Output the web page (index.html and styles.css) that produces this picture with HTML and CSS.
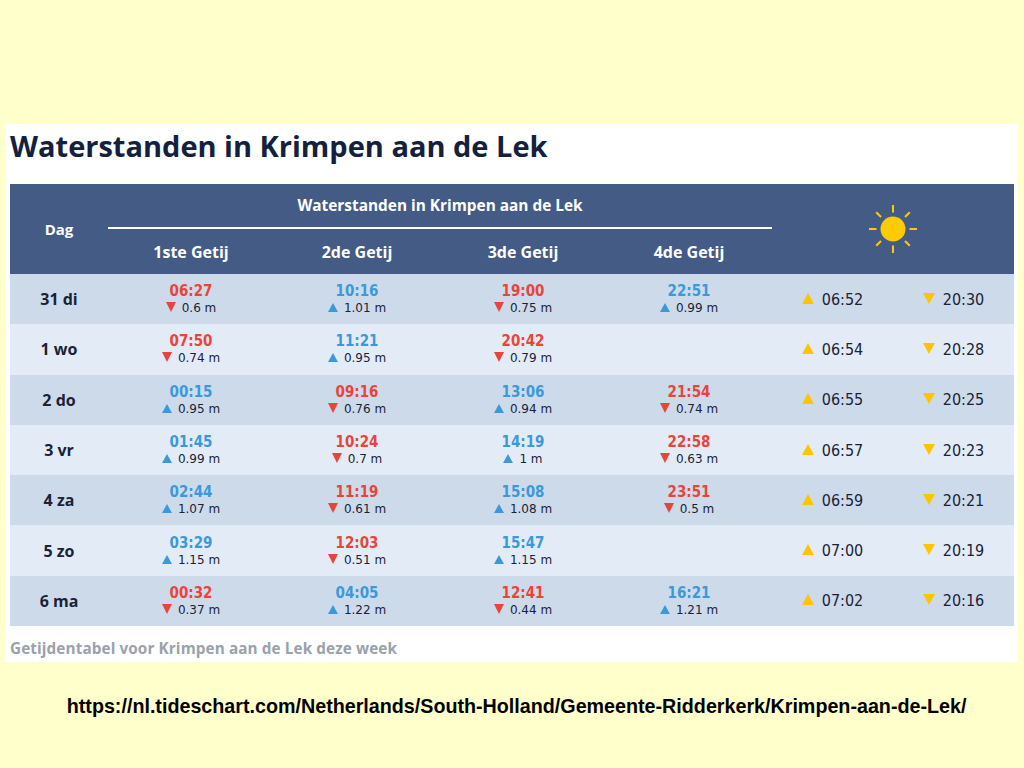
FILE: index.html
```html
<!DOCTYPE html>
<html lang="nl">
<head>
<meta charset="utf-8">
<title>Waterstanden in Krimpen aan de Lek</title>
<link rel="stylesheet" href="styles.css">
</head>
<body>
<div class="panel">
  <h1 class="title">Waterstanden in Krimpen aan de Lek</h1>
  <table class="tides">
    <colgroup>
      <col class="c-day"><col class="c-tide"><col class="c-tide"><col class="c-tide"><col class="c-tide"><col class="c-sun"><col class="c-sun">
    </colgroup>
    <thead>
      <tr class="h1">
        <th rowspan="2" class="h-day">Dag</th>
        <th colspan="4" class="h-group">Waterstanden in Krimpen aan de Lek</th>
        <th colspan="2" rowspan="2" class="h-sun">
          <svg class="sun" width="50" height="50" viewBox="-25 -25 50 50" aria-hidden="true">
            <circle cx="0" cy="0" r="12.5" fill="#fecb00"/>
            <g stroke="#fecb00" stroke-width="2" stroke-linecap="butt">
              <line x1="0" y1="-16.5" x2="0" y2="-24"/>
              <line x1="0" y1="16.5" x2="0" y2="24"/>
              <line x1="-16.5" y1="0" x2="-24" y2="0"/>
              <line x1="16.5" y1="0" x2="24" y2="0"/>
              <line x1="12" y1="-12" x2="16.8" y2="-16.8"/>
              <line x1="-12" y1="-12" x2="-16.8" y2="-16.8"/>
              <line x1="12" y1="12" x2="16.8" y2="16.8"/>
              <line x1="-12" y1="12" x2="-16.8" y2="16.8"/>
            </g>
          </svg>
        </th>
      </tr>
      <tr class="h2">
        <th>1ste Getij</th>
        <th>2de Getij</th>
        <th>3de Getij</th>
        <th>4de Getij</th>
      </tr>
    </thead>
    <tbody>
      <tr>
        <td class="day">31 di</td>
        <td><div class="t low">06:27</div><div class="h"><span class="tri down red"></span>0.6 m</div></td>
        <td><div class="t high">10:16</div><div class="h"><span class="tri up blue"></span>1.01 m</div></td>
        <td><div class="t low">19:00</div><div class="h"><span class="tri down red"></span>0.75 m</div></td>
        <td><div class="t high">22:51</div><div class="h"><span class="tri up blue"></span>0.99 m</div></td>
        <td class="s"><span class="stri up"></span>06:52</td>
        <td class="s"><span class="stri down"></span>20:30</td>
      </tr>
      <tr>
        <td class="day">1 wo</td>
        <td><div class="t low">07:50</div><div class="h"><span class="tri down red"></span>0.74 m</div></td>
        <td><div class="t high">11:21</div><div class="h"><span class="tri up blue"></span>0.95 m</div></td>
        <td><div class="t low">20:42</div><div class="h"><span class="tri down red"></span>0.79 m</div></td>
        <td></td>
        <td class="s"><span class="stri up"></span>06:54</td>
        <td class="s"><span class="stri down"></span>20:28</td>
      </tr>
      <tr>
        <td class="day">2 do</td>
        <td><div class="t high">00:15</div><div class="h"><span class="tri up blue"></span>0.95 m</div></td>
        <td><div class="t low">09:16</div><div class="h"><span class="tri down red"></span>0.76 m</div></td>
        <td><div class="t high">13:06</div><div class="h"><span class="tri up blue"></span>0.94 m</div></td>
        <td><div class="t low">21:54</div><div class="h"><span class="tri down red"></span>0.74 m</div></td>
        <td class="s"><span class="stri up"></span>06:55</td>
        <td class="s"><span class="stri down"></span>20:25</td>
      </tr>
      <tr>
        <td class="day">3 vr</td>
        <td><div class="t high">01:45</div><div class="h"><span class="tri up blue"></span>0.99 m</div></td>
        <td><div class="t low">10:24</div><div class="h"><span class="tri down red"></span>0.7 m</div></td>
        <td><div class="t high">14:19</div><div class="h"><span class="tri up blue"></span>1 m</div></td>
        <td><div class="t low">22:58</div><div class="h"><span class="tri down red"></span>0.63 m</div></td>
        <td class="s"><span class="stri up"></span>06:57</td>
        <td class="s"><span class="stri down"></span>20:23</td>
      </tr>
      <tr>
        <td class="day">4 za</td>
        <td><div class="t high">02:44</div><div class="h"><span class="tri up blue"></span>1.07 m</div></td>
        <td><div class="t low">11:19</div><div class="h"><span class="tri down red"></span>0.61 m</div></td>
        <td><div class="t high">15:08</div><div class="h"><span class="tri up blue"></span>1.08 m</div></td>
        <td><div class="t low">23:51</div><div class="h"><span class="tri down red"></span>0.5 m</div></td>
        <td class="s"><span class="stri up"></span>06:59</td>
        <td class="s"><span class="stri down"></span>20:21</td>
      </tr>
      <tr>
        <td class="day">5 zo</td>
        <td><div class="t high">03:29</div><div class="h"><span class="tri up blue"></span>1.15 m</div></td>
        <td><div class="t low">12:03</div><div class="h"><span class="tri down red"></span>0.51 m</div></td>
        <td><div class="t high">15:47</div><div class="h"><span class="tri up blue"></span>1.15 m</div></td>
        <td></td>
        <td class="s"><span class="stri up"></span>07:00</td>
        <td class="s"><span class="stri down"></span>20:19</td>
      </tr>
      <tr>
        <td class="day">6 ma</td>
        <td><div class="t low">00:32</div><div class="h"><span class="tri down red"></span>0.37 m</div></td>
        <td><div class="t high">04:05</div><div class="h"><span class="tri up blue"></span>1.22 m</div></td>
        <td><div class="t low">12:41</div><div class="h"><span class="tri down red"></span>0.44 m</div></td>
        <td><div class="t high">16:21</div><div class="h"><span class="tri up blue"></span>1.21 m</div></td>
        <td class="s"><span class="stri up"></span>07:02</td>
        <td class="s"><span class="stri down"></span>20:16</td>
      </tr>
    </tbody>
  </table>
  <p class="caption">Getijdentabel voor Krimpen aan de Lek deze week</p>
</div>
<p class="url"><span class="url-text">https://nl.tideschart.com/Netherlands/South-Holland/Gemeente-Ridderkerk/Krimpen-aan-de-Lek/</span></p>
</body>
</html>
```

FILE: styles.css
```css
html, body {
  margin: 0;
  padding: 0;
  background: #ffffcc;
}

body {
  font-family: "Open Sans", "DejaVu Sans", sans-serif;
  width: 1024px;
  height: 768px;
  overflow: hidden;
}

.panel {
  background: #ffffff;
  margin: 124px 0 0 5px;
  width: 1013px;
  padding: 0 4px 0 5px;
  box-sizing: border-box;
}

.title {
  margin: 0;
  height: 60px;
  box-sizing: border-box;
  padding-top: 2px;
  font-family: "Open Sans", sans-serif;
  font-weight: 700;
  font-size: 29px;
  line-height: 40px;
  color: #13213f;
  letter-spacing: 0;
}

.tides {
  width: 1004px;
  table-layout: fixed;
  border-collapse: collapse;
  border-spacing: 0;
}

.c-day { width: 98px; }
.c-tide { width: 166px; }
.c-sun { width: 121px; }

.tides thead th {
  background: #435b85;
  color: #ffffff;
  font-family: "Open Sans", sans-serif;
  font-weight: 700;
  padding: 0;
  text-align: center;
}

.h1 { height: 44px; }
.h2 { height: 46px; }

.h-day {
  font-size: 15px;
}

.h-group {
  font-size: 15.4px;
  border-bottom: 2px solid #ffffff;
  vertical-align: middle;
}

.h2 th {
  font-size: 16px;
}

.h-sun {
  vertical-align: middle;
}

.sun {
  display: block;
  margin: 0 auto;
}

.tides tbody tr {
  height: 50.3px;
}

.tides tbody tr:nth-child(odd) { background: #cddaea; }
.tides tbody tr:nth-child(even) { background: #e3ecf6; }

.tides td {
  padding: 0;
  text-align: center;
  vertical-align: middle;
  font-family: "DejaVu Sans Condensed", "DejaVu Sans", sans-serif;
  color: #1a2238;
}

.tides td.day {
  font-family: "Open Sans", sans-serif;
  font-weight: 700;
  font-size: 16px;
  color: #1a2238;
}

.t {
  font-weight: 700;
  font-size: 15px;
  line-height: 18px;
}

.t.low { color: #e9443a; }
.t.high { color: #3b99db; }

.h {
  font-family: "DejaVu Sans", sans-serif;
  font-size: 12px;
  line-height: 16px;
  color: #1a2238;
}

.tri {
  display: inline-block;
  width: 0;
  height: 0;
  margin-right: 6px;
  vertical-align: 0;
  border-left: 5px solid transparent;
  border-right: 5px solid transparent;
}

.tri.down.red { border-top: 10px solid #e9443a; }
.tri.up.blue { border-bottom: 9px solid #3b99db; }

.tides td.s {
  font-size: 16px;
  color: #1a2238;
}

.stri {
  display: inline-block;
  width: 0;
  height: 0;
  margin-right: 8px;
  border-left: 6px solid transparent;
  border-right: 6px solid transparent;
  vertical-align: 1px;
}

.stri.up { border-bottom: 11px solid #fec400; }
.stri.down { border-top: 11px solid #fec400; }

.caption {
  margin: 0;
  height: 36px;
  font-family: "Open Sans", sans-serif;
  font-weight: 700;
  font-size: 15.3px;
  letter-spacing: 0.1px;
  color: #9aa2ab;
  overflow: hidden;
  line-height: 44px;
}

.url {
  margin: 0;
  padding-top: 32px;
  text-align: center;
  font-family: "Liberation Sans", Arial, sans-serif;
  font-weight: 700;
  font-size: 21px;
  line-height: 24px;
  color: #000000;
}

.url-text {
  display: inline-block;
  transform: scaleX(0.938);
  transform-origin: 50% 50%;
  margin-left: 10px;
}
```
